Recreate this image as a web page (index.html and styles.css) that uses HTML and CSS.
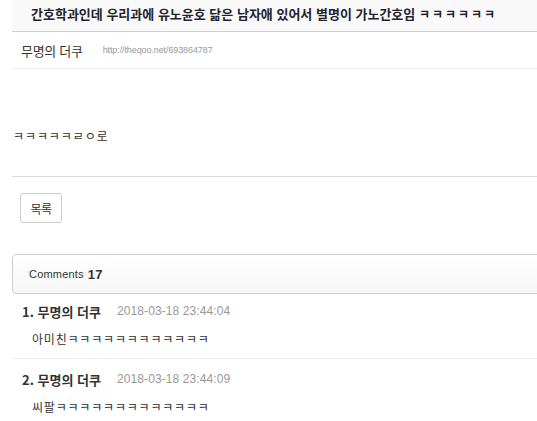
FILE: index.html
```html
<!DOCTYPE html>
<html lang="ko">
<head>
<meta charset="utf-8">
<title>theqoo</title>
<link rel="stylesheet" href="styles.css">
</head>
<body>
<div class="viewport">
<div class="page">
  <div class="title-bar">
    <h1 class="title">간호학과인데 우리과에 유노윤호 닮은 남자애 있어서 별명이 가노간호임 <span class="kk">ㅋㅋㅋㅋㅋㅋ</span></h1>
  </div>
  <div class="meta">
    <span class="author">무명의 더쿠</span>
    <span class="url">http://theqoo.net/693864787</span>
  </div>
  <div class="content">ㅋㅋㅋㅋㅋㄹㅇ로</div>
  <div class="actions">
    <button class="btn">목록</button>
  </div>
  <div class="comments-head">Comments <b>17</b></div>
  <ul class="comments">
    <li class="comment">
      <div class="c-head"><span class="c-name">1. 무명의 더쿠</span><span class="c-date">2018-03-18 23:44:04</span></div>
      <div class="c-body">아미친ㅋㅋㅋㅋㅋㅋㅋㅋㅋㅋㅋㅋ</div>
    </li>
    <li class="comment">
      <div class="c-head"><span class="c-name">2. 무명의 더쿠</span><span class="c-date">2018-03-18 23:44:09</span></div>
      <div class="c-body">씨팔ㅋㅋㅋㅋㅋㅋㅋㅋㅋㅋㅋㅋㅋ</div>
    </li>
  </ul>
</div>
</div>
</body>
</html>
```

FILE: styles.css
```css
html, body {
  margin: 0;
  padding: 0;
  background: #fff;
}
body {
  font-family: "Noto Sans CJK KR", "Noto Sans", sans-serif;
  color: #333;
}
.viewport {
  width: 537px;
  height: 421px;
  overflow: hidden;
}
.page {
  margin-left: 12px;
  width: 600px;
}
.title-bar {
  height: 31px;
  background: #f9f9f9;
  border-bottom: 1px solid #cfcfcf;
  display: flex;
  align-items: center;
  padding-left: 19px;
}
.title {
  margin: 0;
  font-size: 13px;
  font-weight: bold;
  letter-spacing: 0;
  color: #23232e;
  line-height: 1;
  position: relative;
  top: -2px;
}
.title .kk {
  font-size: 12px;
  letter-spacing: 2px;
}
.meta {
  height: 36px;
  border-bottom: 1px solid #ebebeb;
  display: flex;
  align-items: center;
  padding-left: 9px;
  gap: 20px;
}
.author {
  font-size: 13px;
  letter-spacing: -0.3px;
  color: #333;
}
.url {
  font-family: "Liberation Sans", Arial, sans-serif;
  font-size: 9px;
  color: #999;
  letter-spacing: -0.1px;
}
.content {
  height: 108px;
  border-bottom: 1px solid #dcdcdc;
  box-sizing: border-box;
  padding: 58px 0 0 1px;
  font-size: 12px;
  line-height: 18px;
  letter-spacing: 0.9px;
  color: #333;
}
.actions {
  padding: 16px 0 0 8px;
  height: 61px;
  box-sizing: border-box;
}
.btn {
  width: 42px;
  height: 30px;
  background: #fff;
  border: 1px solid #ccc;
  border-radius: 3px;
  font-family: "Noto Sans CJK KR", sans-serif;
  font-size: 12px;
  color: #333;
  padding: 0;
  letter-spacing: -0.5px;
}
.comments-head {
  margin-top: 16px;
  height: 38px;
  border: 1px solid #cfcfcf;
  border-radius: 4px;
  background: linear-gradient(#ffffff, #f7f7f7);
  display: flex;
  align-items: center;
  padding-left: 16px;
  font-family: "Liberation Sans", Arial, sans-serif;
  font-size: 11px;
  letter-spacing: 0.2px;
  color: #333;
}
.comments-head b {
  font-size: 13px;
  margin-left: 4px;
  color: #333;
}
.comments {
  list-style: none;
  margin: -3px 0 0;
  padding: 0;
}
.comment {
  border-bottom: 1px solid #eee;
  padding: 10px 0 10px 10px;
}
.c-head {
  display: flex;
  align-items: center;
  gap: 16px;
  height: 20px;
}
.c-name {
  font-size: 13px;
  font-weight: bold;
  letter-spacing: 0;
  color: #333;
}
.c-date {
  font-family: "Liberation Sans", Arial, sans-serif;
  font-size: 12px;
  letter-spacing: 0.1px;
  color: #999;
}
.c-body {
  margin-top: 9px;
  padding-left: 10px;
  font-size: 12px;
  letter-spacing: 0.8px;
  color: #333;
  height: 18px;
  line-height: 18px;
}
```
